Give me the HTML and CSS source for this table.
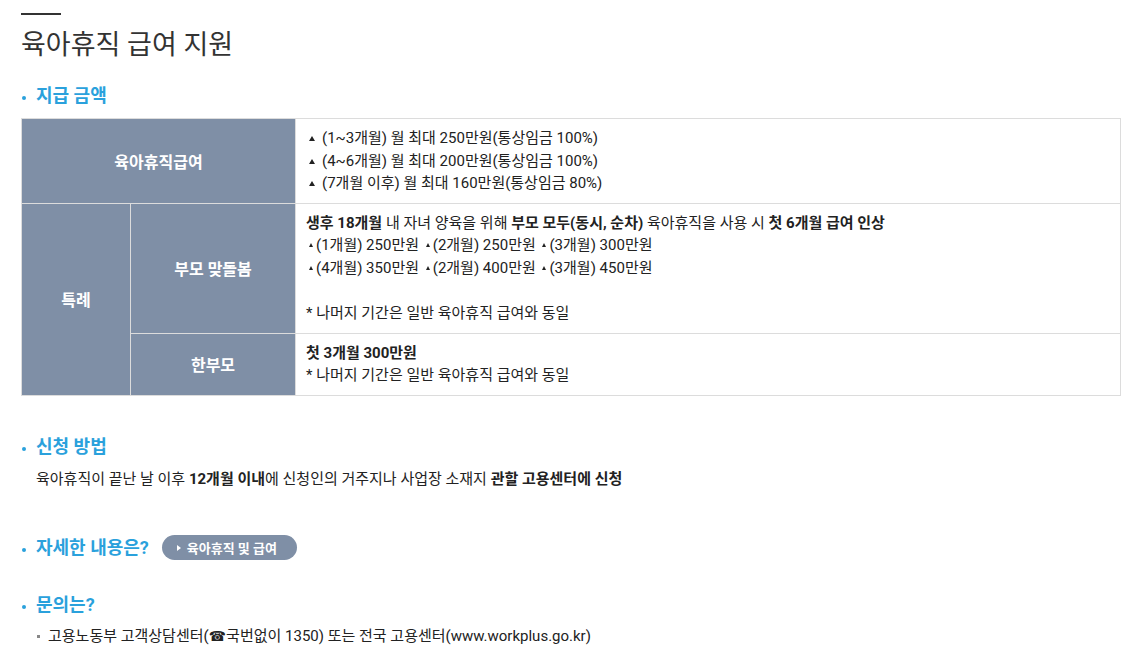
FILE: index.html
```html
<!DOCTYPE html>
<html lang="ko">
<head>
<meta charset="utf-8">
<title>육아휴직 급여 지원</title>
<link rel="stylesheet" href="styles.css">
</head>
<body>
<div class="page">
  <div class="title-bar"></div>
  <h2 class="page-title">육아휴직 급여 지원</h2>

  <h3 class="sec-title first">지급 금액</h3>
  <table class="pay-table">
    <colgroup>
      <col class="c1"><col class="c2"><col class="c3">
    </colgroup>
    <tbody>
      <tr class="r1">
        <th colspan="2">육아휴직급여</th>
        <td>
          <ul class="tri-list">
            <li>(1~3개월) 월 최대 250만원(통상임금 100%)</li>
            <li>(4~6개월) 월 최대 200만원(통상임금 100%)</li>
            <li>(7개월 이후) 월 최대 160만원(통상임금 80%)</li>
          </ul>
        </td>
      </tr>
      <tr class="r2">
        <th rowspan="2">특례</th>
        <th>부모 맞돌봄</th>
        <td>
          <p><b>생후 18개월</b> 내 자녀 양육을 위해 <b>부모 모두(동시, 순차)</b> 육아휴직을 사용 시 <b>첫 6개월 급여 인상</b></p>
          <p><span class="tri"></span>(1개월) 250만원 <span class="tri"></span>(2개월) 250만원 <span class="tri"></span>(3개월) 300만원</p>
          <p><span class="tri"></span>(4개월) 350만원 <span class="tri"></span>(2개월) 400만원 <span class="tri"></span>(3개월) 450만원</p>
          <p class="blank">&nbsp;</p>
          <p>* 나머지 기간은 일반 육아휴직 급여와 동일</p>
        </td>
      </tr>
      <tr class="r3">
        <th>한부모</th>
        <td>
          <p><b>첫 3개월 300만원</b></p>
          <p>* 나머지 기간은 일반 육아휴직 급여와 동일</p>
        </td>
      </tr>
    </tbody>
  </table>

  <h3 class="sec-title apply">신청 방법</h3>
  <p class="sec-text">육아휴직이 끝난 날 이후 <b>12개월 이내</b>에 신청인의 거주지나 사업장 소재지 <b>관할 고용센터에 신청</b></p>

  <div class="sec-row">
    <h3 class="sec-title inline">자세한 내용은?</h3>
    <a class="link-btn" href="#"><span class="arrow"></span>육아휴직 및 급여</a>
  </div>

  <h3 class="sec-title ask">문의는?</h3>
  <ul class="contact">
    <li>고용노동부 고객상담센터(<span class="phone">☎</span>국번없이 1350) 또는 전국 고용센터(www.workplus.go.kr)</li>
  </ul>
</div>
</body>
</html>
```

FILE: styles.css
```css
* { box-sizing: border-box; }

body {
  margin: 0;
  background: #fff;
  color: #222;
  font-family: Roboto, "Noto Sans CJK KR", "Noto Sans", sans-serif;
  font-size: 15px;
}

.page {
  padding: 13px 0 0 21px;
  width: 1121px;
}

.title-bar {
  width: 40px;
  height: 2px;
  background: #333;
}

.page-title {
  margin: 13px 0 0;
  font-size: 27px;
  line-height: 34px;
  font-weight: 400;
  color: #333;
}

.sec-title {
  position: relative;
  margin: 0;
  padding-left: 15px;
  font-size: 18px;
  line-height: 26px;
  font-weight: 700;
  color: #2aa1dc;
}

.sec-title::before {
  content: "";
  position: absolute;
  left: 1px;
  top: 13px;
  width: 4px;
  height: 4px;
  border-radius: 50%;
  background: #2aa1dc;
}

.sec-title.first { margin-top: 21px; margin-bottom: 9px; }
.sec-title.apply { margin-top: 38px; }
.sec-title.ask { margin-top: 31px; }

.pay-table {
  width: 1100px;
  table-layout: fixed;
  border-collapse: collapse;
  border: 1px solid #dcdcdc;
}

.pay-table .c1 { width: 109px; }
.pay-table .c2 { width: 165px; }

.pay-table th {
  background: #7f8fa6;
  color: #fff;
  font-weight: 700;
  font-size: 16px;
  text-align: center;
  border: 1px solid #dcdcdc;
}

.pay-table td {
  padding: 8px 10px;
  border: 1px solid #dcdcdc;
  line-height: 22.6px;
  vertical-align: middle;
  color: #222;
}

.pay-table p { margin: 0; }

.tri-list {
  list-style: none;
  margin: 0;
  padding: 0;
}

.tri-list li {
  position: relative;
  padding-left: 16px;
}

.tri-list li::before {
  content: "";
  position: absolute;
  left: 3px;
  top: 9px;
  border-left: 3px solid transparent;
  border-right: 3px solid transparent;
  border-bottom: 5px solid #222;
}

.tri {
  display: inline-block;
  vertical-align: middle;
  margin: -3px 3px 0 3px;
  border-left: 2px solid transparent;
  border-right: 2px solid transparent;
  border-bottom: 4px solid #222;
}

.pay-table td p .tri:first-child { margin-left: 3px; }

.sec-text {
  margin: 8px 0 0;
  padding-left: 15px;
  line-height: 22px;
  color: #222;
}

.sec-row {
  display: flex;
  align-items: center;
  gap: 13px;
  margin-top: 45px;
}

.link-btn {
  display: inline-flex;
  align-items: center;
  height: 25px;
  padding: 0 20px 0 15px;
  border-radius: 13px;
  background: #7f8fa6;
  color: #fff;
  font-size: 13px;
  font-weight: 700;
  text-decoration: none;
}

.link-btn .arrow {
  width: 0;
  height: 0;
  margin-right: 6px;
  border-top: 3px solid transparent;
  border-bottom: 3px solid transparent;
  border-left: 4px solid #fff;
}

.contact {
  list-style: none;
  margin: 7px 0 0;
  padding: 0 0 0 27px;
}

.contact li {
  position: relative;
  line-height: 22px;
  color: #222;
}

.contact li::before {
  content: "";
  position: absolute;
  left: -11px;
  top: 10px;
  width: 3px;
  height: 3px;
  background: #888;
}

.phone {
  font-family: "DejaVu Sans", sans-serif;
  font-size: 14px;
}
```
